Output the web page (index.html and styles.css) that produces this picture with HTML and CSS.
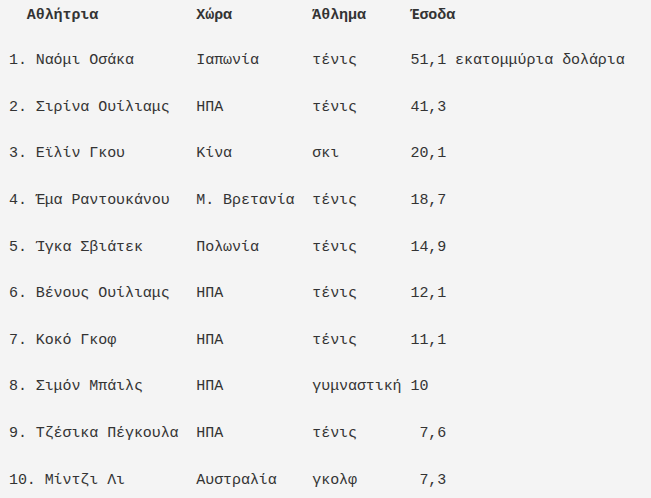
FILE: index.html
```html
<!DOCTYPE html>
<html lang="el">
<head>
<meta charset="utf-8">
<title>Αθλήτριες</title>
<link rel="stylesheet" href="styles.css">
</head>
<body>
<div class="listing">
<div class="row head">  Αθλήτρια           Χώρα         Άθλημα     Έσοδα</div>
<div class="row">1. Ναόμι Οσάκα       Ιαπωνία      τένις      51,1 εκατομμύρια δολάρια</div>
<div class="row">2. Σιρίνα Ουίλιαμς   ΗΠΑ          τένις      41,3</div>
<div class="row">3. Εϊλίν Γκου        Κίνα         σκι        20,1</div>
<div class="row">4. Έμα Ραντουκάνου   Μ. Βρετανία  τένις      18,7</div>
<div class="row">5. Ίγκα Σβιάτεκ      Πολωνία      τένις      14,9</div>
<div class="row">6. Βένους Ουίλιαμς   ΗΠΑ          τένις      12,1</div>
<div class="row">7. Κοκό Γκοφ         ΗΠΑ          τένις      11,1</div>
<div class="row">8. Σιμόν Μπάιλς      ΗΠΑ          γυμναστική 10</div>
<div class="row">9. Τζέσικα Πέγκουλα  ΗΠΑ          τένις       7,6</div>
<div class="row">10. Μίντζι Λι        Αυστραλία    γκολφ       7,3</div>
</div>
</body>
</html>
```
FILE: styles.css
```css
html, body {
  margin: 0;
  padding: 0;
  background: #f4f4f4;
}
.listing {
  padding: 4px 0 0 9px;
  font-family: "Liberation Mono", "DejaVu Sans Mono", monospace;
  font-size: 15px;
  letter-spacing: -0.08px;
  color: #333333;
}
.row {
  white-space: pre;
  line-height: 23.3px;
  height: 23.3px;
  margin-bottom: 23.3px;
}
.row.head {
  font-weight: bold;
  margin-bottom: 22px;
}
```
